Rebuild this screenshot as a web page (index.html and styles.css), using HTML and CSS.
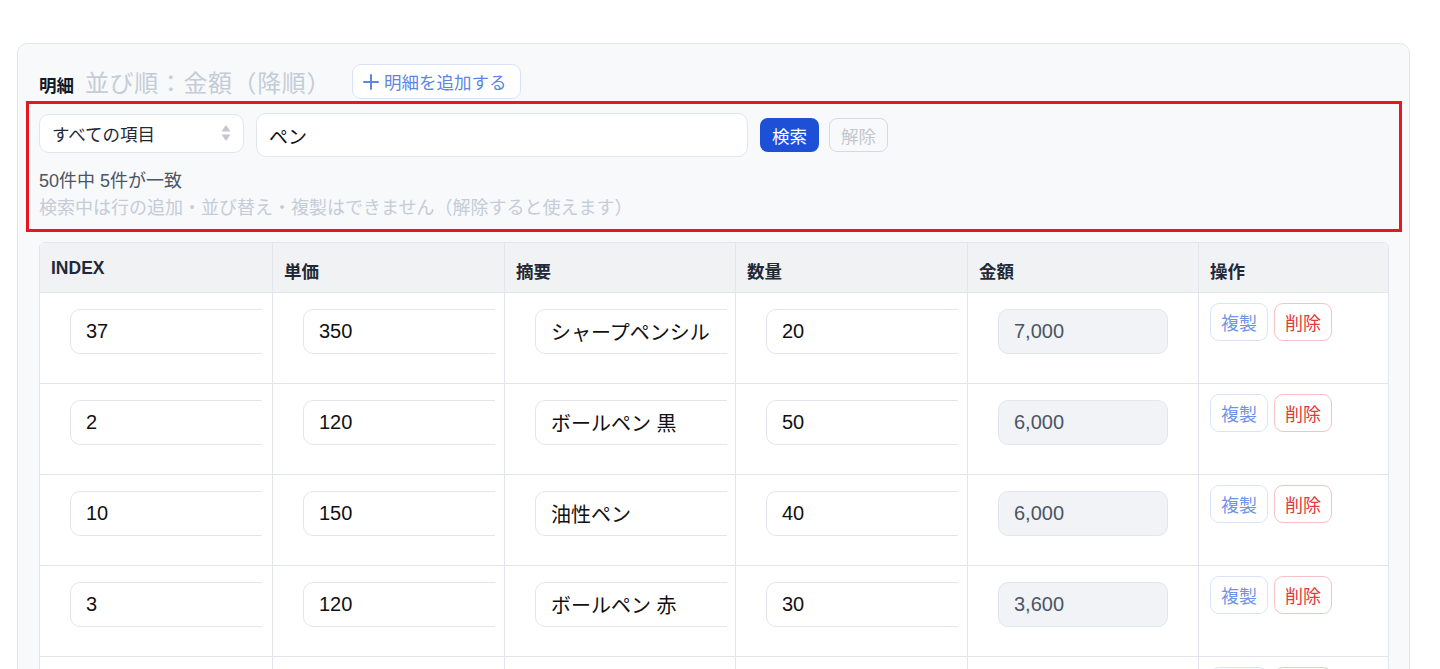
FILE: index.html
```html
<!DOCTYPE html>
<html lang="ja">
<head>
<meta charset="utf-8">
<title>明細</title>
<link rel="stylesheet" href="styles.css">
</head>
<body>
<div class="card">
  <div class="head">
    <span class="title">明細</span>
    <span class="sort">並び順：金額（降順）</span>
    <button class="add"><svg width="16" height="16" viewBox="0 0 16 16"><path d="M8 1v14M1 8h14" stroke="#5b86e5" stroke-width="2" stroke-linecap="round"/></svg>明細を追加する</button>
  </div>
  <div class="search">
    <div class="search-row">
      <div class="select">すべての項目<svg class="arrows" width="10" height="18" viewBox="0 0 10 18"><path d="M5 1l4.5 6.5h-9z" fill="#c3c7cd"/><path d="M5 17l4.5-6.5h-9z" fill="#c3c7cd"/></svg></div>
      <div class="query">ペン</div>
      <button class="btn-search">検索</button>
      <button class="btn-clear">解除</button>
    </div>
    <div class="count">50件中 5件が一致</div>
    <div class="note">検索中は行の追加・並び替え・複製はできません（解除すると使えます）</div>
  </div>
  <div class="table">
    <div class="tr th">
      <div class="td">INDEX</div>
      <div class="td">単価</div>
      <div class="td">摘要</div>
      <div class="td">数量</div>
      <div class="td">金額</div>
      <div class="td">操作</div>
    </div>
    <div class="tr">
      <div class="td"><div class="clip"><div class="inp">37</div></div></div>
      <div class="td"><div class="clip"><div class="inp">350</div></div></div>
      <div class="td"><div class="clip"><div class="inp">シャープペンシル</div></div></div>
      <div class="td"><div class="clip"><div class="inp">20</div></div></div>
      <div class="td"><div class="amt">7,000</div></div>
      <div class="td ops"><button class="dup">複製</button><button class="del">削除</button></div>
    </div>
    <div class="tr">
      <div class="td"><div class="clip"><div class="inp">2</div></div></div>
      <div class="td"><div class="clip"><div class="inp">120</div></div></div>
      <div class="td"><div class="clip"><div class="inp">ボールペン 黒</div></div></div>
      <div class="td"><div class="clip"><div class="inp">50</div></div></div>
      <div class="td"><div class="amt">6,000</div></div>
      <div class="td ops"><button class="dup">複製</button><button class="del">削除</button></div>
    </div>
    <div class="tr">
      <div class="td"><div class="clip"><div class="inp">10</div></div></div>
      <div class="td"><div class="clip"><div class="inp">150</div></div></div>
      <div class="td"><div class="clip"><div class="inp">油性ペン</div></div></div>
      <div class="td"><div class="clip"><div class="inp">40</div></div></div>
      <div class="td"><div class="amt">6,000</div></div>
      <div class="td ops"><button class="dup">複製</button><button class="del">削除</button></div>
    </div>
    <div class="tr">
      <div class="td"><div class="clip"><div class="inp">3</div></div></div>
      <div class="td"><div class="clip"><div class="inp">120</div></div></div>
      <div class="td"><div class="clip"><div class="inp">ボールペン 赤</div></div></div>
      <div class="td"><div class="clip"><div class="inp">30</div></div></div>
      <div class="td"><div class="amt">3,600</div></div>
      <div class="td ops"><button class="dup">複製</button><button class="del">削除</button></div>
    </div>
    <div class="tr">
      <div class="td"></div>
      <div class="td"></div>
      <div class="td"></div>
      <div class="td"></div>
      <div class="td"></div>
      <div class="td ops"><button class="dup" aria-label="複製"></button><button class="del" aria-label="削除"></button></div>
    </div>
  </div>
</div>
</body>
</html>
```
FILE: styles.css
```css
* { box-sizing: border-box; }
html, body { margin: 0; padding: 0; background: #fff; }
body {
  font-family: "Liberation Sans", "Noto Sans CJK JP", sans-serif;
  color: #111827;
  padding: 43px 30px 0 17px;
  height: 669px;
  overflow: hidden;
}
button { font-family: inherit; cursor: pointer; }
.card {
  width: 1393px;
  background: #f8f9fb;
  border: 1px solid #e3e6eb;
  border-radius: 10px;
  padding: 20px 21px 0 21px;
}
.head {
  display: flex;
  align-items: center;
  height: 35px;
}
.title {
  font-size: 17.5px;
  font-weight: bold;
  color: #111827;
  margin-top: 6px;
}
.sort {
  font-size: 24px;
  letter-spacing: 0.6px;
  color: #c4ccd8;
  margin-left: 11px;
}
.add {
  margin-left: 21px;
  height: 35px;
  width: 169px;
  border: 1px solid #d8e2f6;
  background: #fff;
  border-radius: 9px;
  color: #5b86e5;
  font-size: 17.5px;
  display: flex;
  align-items: center;
  gap: 5px;
  padding: 0 0 0 10px;
}
.search {
  margin: 2px -14px 0 -13px;
  border: 3px solid #e8161f;
  padding: 9px 10px 8px 10px;
}
.search-row {
  display: flex;
  align-items: center;
  gap: 12px;
}
.select {
  width: 205px;
  height: 39px;
  margin-top: -4px;
  background: #fff;
  border: 1px solid #e2e6ec;
  border-radius: 10px;
  font-size: 17.5px;
  color: #1f2937;
  display: flex;
  align-items: center;
  justify-content: space-between;
  padding: 0 12px 0 12px;
}
.query {
  width: 492px;
  height: 44px;
  background: #fff;
  border: 1px solid #e2e6ec;
  border-radius: 10px;
  font-size: 19px;
  color: #111;
  display: flex;
  align-items: center;
  padding: 0 12px;
}
.btn-search {
  width: 59px;
  height: 34px;
  border: none;
  background: #1d4fd7;
  color: #fff;
  font-size: 17.5px;
  border-radius: 8px;
  padding: 0;
}
.btn-clear {
  width: 59px;
  height: 34px;
  margin-left: -2px;
  border: 1px solid #d6d9de;
  background: #f8f9fb;
  color: #c4c7cc;
  font-size: 17.5px;
  border-radius: 8px;
  padding: 0;
}
.count {
  margin-top: 11px;
  font-size: 18px;
  color: #4b5563;
  line-height: 26px;
}
.note {
  font-size: 18px;
  color: #c4ccd8;
  line-height: 26px;
  margin-top: 1px;
}
.table {
  margin-top: 10px;
  width: 1350px;
  background: #fff;
  border: 1px solid #e2e6ec;
  border-radius: 6px 6px 0 0;
}
.tr {
  display: grid;
  grid-template-columns: 232px 232px 231px 232px 231px 1fr;
  height: 91px;
  border-top: 1px solid #e2e6ec;
}
.tr.th {
  height: 49px;
  border-top: none;
  background: #f1f2f4;
  border-radius: 6px 6px 0 0;
}
.th .td {
  font-size: 17.5px;
  font-weight: bold;
  color: #1f2937;
  padding: 15px 11px 0;
}
.td {
  border-left: 1px solid #e2e6ec;
  padding: 16px 9px 0 30px;
  min-width: 0;
}
.td:first-child { border-left: none; }
.clip {
  overflow: hidden;
  width: 192px;
}
.inp {
  width: 210px;
  height: 45px;
  border: 1px solid #e2e6ec;
  border-radius: 10px;
  background: #fff;
  font-size: 20px;
  color: #111;
  display: flex;
  align-items: center;
  padding: 0 15px;
  white-space: nowrap;
}
.amt {
  width: 170px;
  height: 45px;
  border: 1px solid #e2e6ec;
  border-radius: 10px;
  background: #f1f3f7;
  font-size: 20px;
  color: #4b5563;
  display: flex;
  align-items: center;
  padding: 0 15px;
}
.ops {
  padding: 10px 0 0 11px;
  display: flex;
  align-items: flex-start;
  gap: 6px;
}
.ops button {
  height: 38px;
  width: 58px;
  border-radius: 9px;
  font-size: 18px;
  background: #fff;
  padding: 0;
}
.dup { border: 1px solid #d9e3fb; color: #6f93e8; }
.del { border: 1px solid #f3c3c3; color: #e03b3b; }
```
